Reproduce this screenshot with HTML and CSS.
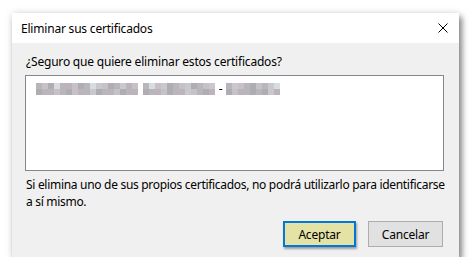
FILE: index.html
```html
<!doctype html>
<html lang="es">
<head>
    <meta charset="UTF-8">
    <title>Eliminar sus certificados</title>
    <link rel="stylesheet" href="styles.css">
</head>
<body>
    <div class="dialog">
        <div class="titlebar">
            <span class="title">Eliminar sus certificados</span>
            <svg class="close" width="10" height="10" viewBox="0 0 10 10">
                <path d="M0.5 0.5 L9.5 9.5 M9.5 0.5 L0.5 9.5" stroke="#000" stroke-width="1" fill="none"/>
            </svg>
        </div>
        <div class="content">
            <div class="question">¿Seguro que quiere eliminar estos certificados?</div>
            <div class="list">
                <div class="item">
                    <!-- nombre del certificado (pixelado) -->
                    <div class="mosaic m17">
                        <i class="a"></i><i class="b"></i><i class="c"></i><i class="e"></i><i class="a"></i><i class="d"></i><i class="b"></i><i class="c"></i><i class="a"></i><i class="e"></i><i class="f"></i><i class="b"></i><i class="c"></i><i class="a"></i><i class="f"></i><i class="d"></i><i class="b"></i>
                        <i class="c"></i><i class="a"></i><i class="d"></i><i class="b"></i><i class="a"></i><i class="c"></i><i class="b"></i><i class="d"></i><i class="a"></i><i class="f"></i><i class="c"></i><i class="a"></i><i class="d"></i><i class="b"></i><i class="c"></i><i class="a"></i><i class="d"></i>
                    </div>
                    <div class="mosaic m12">
                        <i class="a"></i><i class="e"></i><i class="b"></i><i class="f"></i><i class="c"></i><i class="a"></i><i class="b"></i><i class="f"></i><i class="c"></i><i class="a"></i><i class="b"></i><i class="f"></i>
                        <i class="c"></i><i class="a"></i><i class="d"></i><i class="b"></i><i class="c"></i><i class="a"></i><i class="d"></i><i class="f"></i><i class="b"></i><i class="a"></i><i class="c"></i><i class="d"></i>
                    </div>
                    <span class="dash">-</span>
                    <div class="mosaic m9">
                        <i class="a"></i><i class="f"></i><i class="b"></i><i class="a"></i><i class="c"></i><i class="b"></i><i class="a"></i><i class="f"></i><i class="e"></i>
                        <i class="c"></i><i class="b"></i><i class="d"></i><i class="a"></i><i class="c"></i><i class="a"></i><i class="c"></i><i class="f"></i><i class="d"></i>
                    </div>
                </div>
            </div>
            <p class="note">Si elimina uno de sus propios certificados, no podrá utilizarlo para identificarse<br>a sí mismo.</p>
            <div class="buttons">
                <button class="btn default">Aceptar</button>
                <button class="btn">Cancelar</button>
            </div>
        </div>
    </div>
</body>
</html>
```

FILE: styles.css
```css
body {
    margin: 0;
    background: #fff;
    font-family: "Noto Sans", "Open Sans", sans-serif;
    font-size: 12px;
    letter-spacing: -0.2px;
    color: #000;
    padding: 13px 0 0 12px;
}
.dialog {
    width: 447px;
    height: 244px;
    background: #f0f0f0;
    box-shadow: 3px 4px 6px rgba(0, 0, 0, 0.45), 0 0 8px rgba(0, 0, 0, 0.12);
    display: flex;
    flex-direction: column;
}
.titlebar {
    height: 30px;
    background: #fff;
    display: flex;
    align-items: center;
    justify-content: space-between;
    padding: 0 11px 0 9px;
}
.title {
    padding-top: 1px;
}
.close {
    display: block;
}
.content {
    padding: 11px 15px 0 13px;
    display: flex;
    flex-direction: column;
}
.question {
    padding-left: 1px;
    line-height: 16px;
    height: 21px;
}
.list {
    height: 94px;
    background: #fff;
    border: 1px solid #828790;
}
.item {
    display: flex;
    align-items: center;
    padding: 7px 0 0 10px;
}
.mosaic {
    display: grid;
    grid-template-rows: 6px 6px;
}
.mosaic.m17 {
    grid-template-columns: repeat(17, 6px);
}
.mosaic.m12 {
    grid-template-columns: repeat(12, 6px);
    margin-left: 5px;
}
.mosaic.m9 {
    grid-template-columns: repeat(9, 6px);
}
.mosaic i {
    display: block;
}
.mosaic .a { background: #b8b6ba; }
.mosaic .b { background: #c6c1c6; }
.mosaic .c { background: #aeadb2; }
.mosaic .d { background: #bdb3bb; }
.mosaic .e { background: #d8dcdf; }
.mosaic .f { background: #c9c9cd; }
.dash {
    width: 11px;
    text-align: center;
    line-height: 12px;
}
.note {
    margin: 5px 0 0 1px;
    line-height: 17px;
    letter-spacing: -0.3px;
    white-space: nowrap;
}
.buttons {
    display: flex;
    justify-content: flex-end;
    gap: 12px;
    margin-top: 11px;
    margin-right: 1px;
}
.btn {
    font-family: inherit;
    font-size: 12px;
    letter-spacing: inherit;
    height: 26px;
    width: 75px;
    background: #e1e1e1;
    border: 1px solid #adadad;
    padding: 0;
    color: #000;
}
.btn.default {
    width: 73px;
    background: #e5e2a6;
    border: 2px solid #0078d7;
    box-shadow: 1px 2px 2px rgba(0, 0, 0, 0.35);
}
```
